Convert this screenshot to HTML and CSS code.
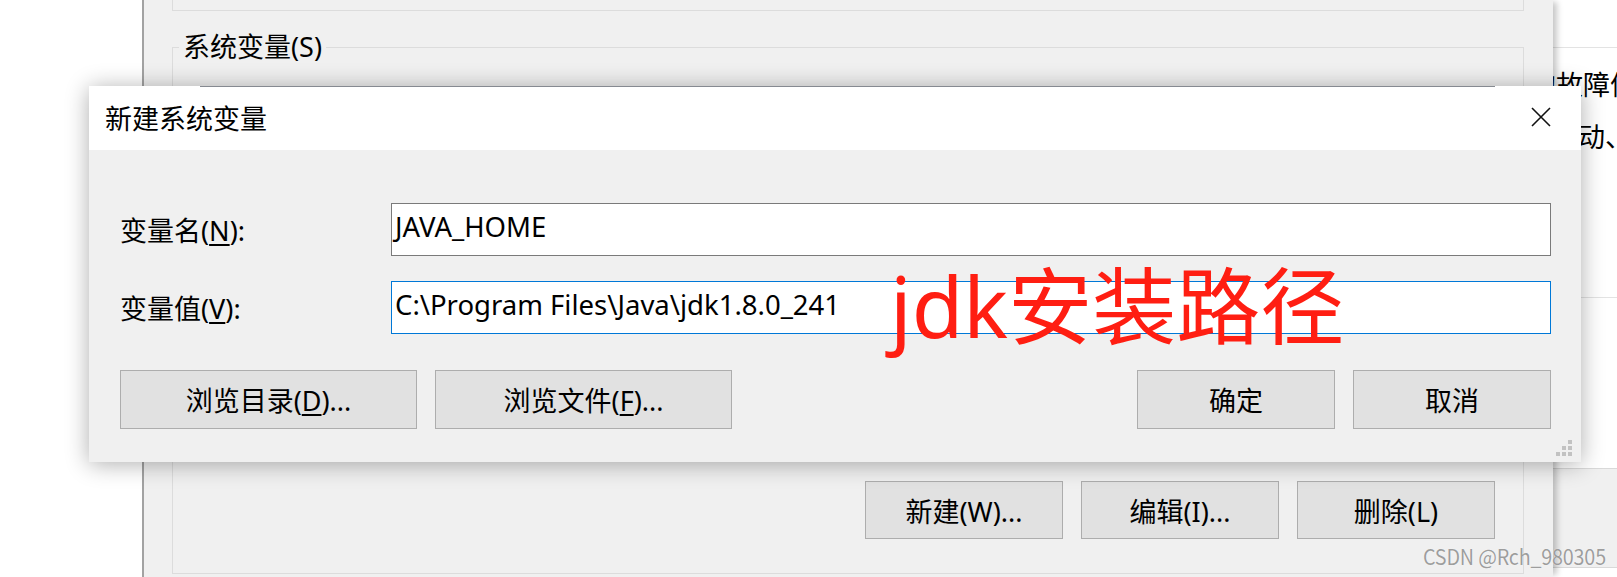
FILE: index.html
```html
<!DOCTYPE html>
<html lang="zh-CN">
<head>
    <meta charset="UTF-8">
    <meta name="viewport" content="width=device-width, initial-scale=1.0">
    <title>新建系统变量</title>
    <link rel="stylesheet" href="styles.css">
</head>
<body>
    <div class="desktop">

        <!-- ventana de detrás, a la derecha -->
        <div class="side-win">
            <div class="side-head"></div>
            <p class="side-line first">的故障信</p>
            <p class="side-line second">动、</p>
            <div class="side-sep"></div>
            <div class="side-foot"></div>
        </div>

        <!-- ventana de variables de entorno -->
        <div class="env-win">
            <div class="user-group"></div>
            <fieldset class="sys-group">
                <legend>系统变量(S)</legend>
                <div class="sys-list"></div>
                <div class="sys-buttons">
                    <button class="btn">新建(W)...</button>
                    <button class="btn">编辑(I)...</button>
                    <button class="btn">删除(L)</button>
                </div>
            </fieldset>
        </div>

        <!-- dialogo -->
        <div class="dialog">
            <div class="titlebar">
                <span class="title">新建系统变量</span>
                <svg class="close" width="20" height="20" viewBox="0 0 20 20">
                    <path d="M1 1 L19 19 M19 1 L1 19" stroke="#111" stroke-width="1.6" fill="none"/>
                </svg>
            </div>
            <div class="dlg-body">
                <div class="form">
                    <label>变量名(<u>N</u>):</label>
                    <div class="field">JAVA_HOME</div>
                    <label>变量值(<u>V</u>):</label>
                    <div class="field active">C:\Program Files\Java\jdk1.8.0_241</div>
                </div>
                <div class="dlg-buttons">
                    <button class="btn wide">浏览目录(<u>D</u>)...</button>
                    <button class="btn wide">浏览文件(<u>F</u>)...</button>
                    <span class="spacer"></span>
                    <button class="btn">确定</button>
                    <button class="btn">取消</button>
                </div>
            </div>
            <svg class="grip" width="16" height="16" viewBox="0 0 16 16">
                <rect x="12" y="0" width="4" height="4" fill="#c2c2c2"/>
                <rect x="6" y="6" width="4" height="4" fill="#c2c2c2"/>
                <rect x="12" y="6" width="4" height="4" fill="#c2c2c2"/>
                <rect x="0" y="12" width="4" height="4" fill="#c2c2c2"/>
                <rect x="6" y="12" width="4" height="4" fill="#c2c2c2"/>
                <rect x="12" y="12" width="4" height="4" fill="#c2c2c2"/>
            </svg>
        </div>

        <div class="note">jdk安装路径</div>
        <div class="watermark">CSDN @Rch_980305</div>
    </div>
</body>
</html>
```

FILE: styles.css
```css
* {
    margin: 0;
    padding: 0;
    box-sizing: border-box;
}

body {
    background-color: #fff;
    font-family: "Noto Sans", "Noto Sans CJK SC", sans-serif;
    font-size: 27px;
    color: #000;
    overflow: hidden;
}

.desktop {
    position: relative;
    width: 1617px;
    height: 577px;
    overflow: hidden;
}

/* ventana de la derecha */
.side-win {
    position: absolute;
    left: 1480px;
    top: 0;
    width: 137px;
    height: 577px;
    background-color: #fff;
}

.side-head {
    height: 48px;
    border-bottom: 1px solid #e3e3e3;
}

.side-line {
    line-height: 52px;
    white-space: nowrap;
}

.side-line.first {
    margin-top: 11px;
    padding-left: 49px;
}

.side-line.second {
    padding-left: 98px;
}

.side-sep {
    height: 135px;
    border-bottom: 1px solid #e3e3e3;
}

.side-foot {
    margin-top: 170px;
    height: 100px;
    background-color: #f0f0f0;
    border-top: 1px solid #d9d9d9;
    border-bottom: 1px solid #d9d9d9;
}

/* ventana de entorno */
.env-win {
    position: absolute;
    left: 142px;
    top: 0;
    width: 1411px;
    height: 577px;
    background-color: #f0f0f0;
    border-left: 2px solid #a2a2a2;
    box-shadow: 6px 0 6px -2px rgba(0, 0, 0, 0.22);
}

.user-group {
    height: 11px;
    margin: 0 29px 0 28px;
    border: 1px solid #dcdcdc;
    border-top: none;
}

.sys-group {
    margin: 18px 29px 0 28px;
    border: 1px solid #dcdcdc;
    padding: 0 0 34px 0;
}

.sys-group legend {
    margin-left: 6px;
    padding: 0 4px;
    line-height: 36px;
}

.sys-list {
    margin: 35px 30px 0 30px;
    height: 340px;
    background-color: #fff;
}

.sys-buttons {
    display: flex;
    justify-content: flex-end;
    gap: 18px;
    margin-top: 41px;
    padding-right: 28px;
}

.btn {
    font-family: inherit;
    font-size: 27px;
    color: #000;
    background-color: #e1e1e1;
    border: 1px solid #adadad;
    width: 198px;
    height: 58px;
}

.btn u {
    text-underline-offset: 3px;
}

/* dialogo nuevo */
.dialog {
    position: absolute;
    left: 89px;
    top: 86px;
    width: 1492px;
    height: 376px;
    background-color: #f0f0f0;
    box-shadow: 0 2px 22px rgba(0, 0, 0, 0.32);
}

.dialog::before {
    content: "";
    position: absolute;
    left: 111px;
    top: 0;
    width: 1295px;
    height: 1px;
    background-color: #868a91;
}

.titlebar {
    height: 64px;
    background-color: #fff;
    display: flex;
    align-items: center;
    justify-content: space-between;
    padding: 0 30px 2px 16px;
}

.dlg-body {
    padding: 53px 30px 0 31px;
}

.form {
    display: grid;
    grid-template-columns: 271px 1fr;
    row-gap: 25px;
    align-items: center;
}

.form label {
    white-space: nowrap;
}

.form u {
    text-underline-offset: 3px;
}

.field {
    height: 53px;
    background-color: #fff;
    border: 1px solid #7a7a7a;
    padding: 3px 0 0 3px;
    line-height: 40px;
    font-size: 27.5px;
    white-space: nowrap;
}

.field.active {
    border-color: #0078d7;
}

.dlg-buttons {
    display: flex;
    gap: 18px;
    margin-top: 36px;
}

.dlg-buttons .btn {
    height: 59px;
}

.dlg-buttons .btn.wide {
    width: 297px;
}

.spacer {
    flex: 1;
}

.grip {
    position: absolute;
    right: 9px;
    bottom: 6px;
}

/* anotaciones encima */
.note {
    position: absolute;
    left: 890px;
    top: 256px;
    font-size: 84px;
    line-height: 1.2;
    color: #ff1e12;
    white-space: nowrap;
}

.watermark {
    position: absolute;
    left: 1423px;
    top: 541px;
    font-family: "Noto Sans CJK SC", sans-serif;
    font-size: 21px;
    line-height: 30px;
    letter-spacing: -0.2px;
    color: rgba(140, 140, 140, 0.85);
    text-shadow: 0 0 1px #fff;
    white-space: nowrap;
    transform: scaleX(0.94);
    transform-origin: left center;
}
```
